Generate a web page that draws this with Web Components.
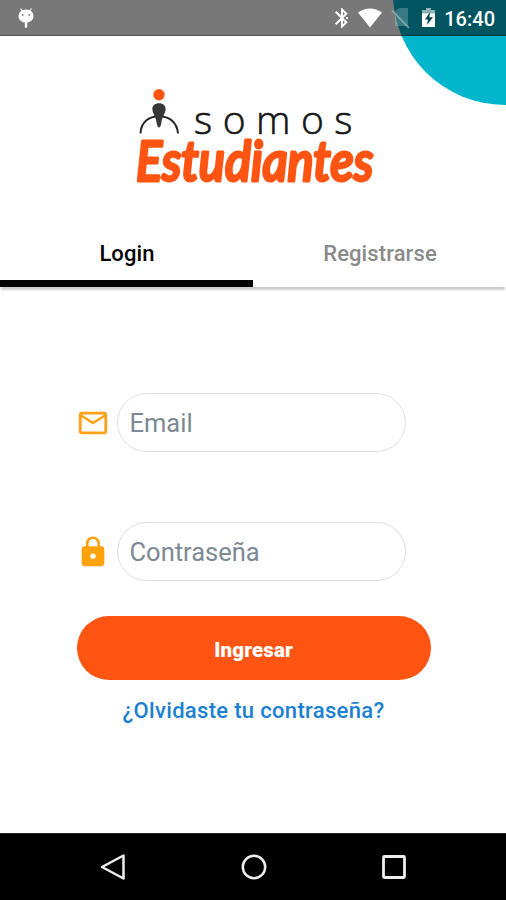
<!DOCTYPE html>
<html lang="es">
<head>
<meta charset="utf-8">
<title>Somos Estudiantes</title>
<style>
html,body{margin:0;height:100%;overflow:hidden;background:#fff}
body{font-family:Roboto,sans-serif}
</style>
</head>
<body>
<student-app></student-app>
<script>
function define(name, markup, setup) {
  const template = document.createElement('template');
  template.innerHTML = markup;
  customElements.define(name, class extends HTMLElement {
    constructor() {
      super();
      this.attachShadow({mode: 'open'}).append(template.content.cloneNode(true));
    }
    connectedCallback() { if (setup) setup(this, this.shadowRoot); }
  });
}

define('status-bar', `
<style>
:host{display:flex;align-items:center;height:36px;box-sizing:border-box;padding:0 11px 0 17px;background:rgba(0,0,0,.53);border-bottom:1px solid rgba(0,0,0,.3);color:#fff;position:relative;flex:none}
svg{display:block;flex:none}
.gap{flex:1}
span{font-size:20px;font-weight:500;line-height:36px;margin:2px 0 0 7px}
</style>
<svg width="18" height="24" viewBox="0 0 18 24" fill="#fff"><path d="M3.500 2.500 5.500 5M14.500 2.500 12.500 5" stroke="#fff" stroke-width="1.200"/><ellipse cx="9" cy="10" rx="7.600" ry="6.600"/><path d="M7.800 16h2.400v5q-1.200 2-2.400 0z"/><circle cx="5.700" cy="9" r="1" fill="#888"/><circle cx="12.300" cy="9" r="1" fill="#888"/></svg>
<div class="gap"></div>
<svg width="24" height="24" viewBox="0 0 24 24" fill="#fff"><path d="M17.710 7.710 12 2h-1v7.590L6.410 5 5 6.410 10.590 12 5 17.590 6.410 19 11 14.410V22h1l5.710-5.710-4.300-4.290zM13 5.830l1.880 1.880L13 9.590zm1.880 10.460L13 18.170v-3.760zM16 11h2v2h-2z"/></svg>
<svg width="26" height="22" viewBox="0 0 26 22" style="margin-left:3px" fill="#fff"><path d="M1 5.500Q13-2.500 25 5.500L13 20.500z"/></svg>
<svg width="20" height="22" viewBox="0 0 20 22" style="margin-left:8px"><path d="M4 4 8 1h9v18H4z" fill="#fff" opacity=".22"/><path d="M1 3.500 18 21" stroke="#a9c3c5" stroke-opacity=".6" stroke-width="1.800"/></svg>
<svg width="16" height="22" viewBox="0 0 16 22" style="margin-left:10px"><path d="M5 1h5v2h4v4H1V3h4z" fill="#8db3b6"/><path d="M1 6.500h13V20H1z" fill="#fff"/><path d="M9 5 4 12.500h3L6 18l6-7.800H8.400z" fill="#00454d"/></svg>
<span>16:40</span>`);

define('brand-logo', `
<style>
:host{display:block;width:252px;height:104px}
svg{display:block;overflow:visible}
</style>
<svg width="252" height="104" viewBox="128 84 252 104">
<circle cx="159" cy="94.700" r="5.700" fill="#ff5412"/>
<path d="M140.500 133.500C141 122 149 116.300 159 116.300S177 122 178 133.500" fill="none" stroke="#252525" stroke-width="2"/>
<path d="M159 103.200c4.200 0 7 2.700 6.600 6.400-.4 4.400-3.200 6.400-4.200 13.200-.5 3.100-1.200 4.700-2.400 4.700s-1.900-1.600-2.400-4.700c-1-6.800-3.800-8.800-4.200-13.200-.4-3.700 2.400-6.400 6.600-6.400z" fill="#38383a"/>
<text x="194" y="133.500" textLength="158.500" lengthAdjust="spacing" font-family="Open Sans,sans-serif" font-size="39" font-weight="300" fill="#171717" stroke="#171717" stroke-width=".6">somos</text>
<g transform="translate(136 181) scale(.83 1.080)"><text x="0" y="0" textLength="286" lengthAdjust="spacingAndGlyphs" font-family="Lato,sans-serif" font-size="51" font-weight="600" font-style="italic" fill="#ff5412" stroke="#ff5412" stroke-width="2.800" stroke-linejoin="round">Estudiantes</text></g>
</svg>`);

define('tab-item', `
<style>
:host{flex:1;display:flex;align-items:center;justify-content:center;box-sizing:border-box;padding:6px 0 0 1px;border-bottom:7px solid transparent;color:#8a8a8a;font-size:22px;font-weight:500;letter-spacing:.1px}
:host([active]){color:#000;border-bottom-color:#000}
</style><span><slot></slot></span>`);

define('tab-bar', `
<style>
:host{display:flex;height:67px;width:100%;box-shadow:0 4px 2px -1px rgba(0,0,0,.2)}
</style><slot></slot>`);

define('form-field', `
<style>
:host{display:flex;align-items:center;gap:7px;height:59px;margin-left:-1px}
slot{display:block}
.icon{display:flex;width:34px;justify-content:center}
input{box-sizing:border-box;width:289px;height:59px;border:1.500px solid #dfdfdf;border-radius:30px;padding:1px 12px 0;background:#fff;outline:none;font:400 25.500px Roboto,sans-serif;color:#333}
input::placeholder{color:#7d8994;opacity:1}
</style><div class="icon"><slot></slot></div><input>`, (host, root) => {
  const input = root.querySelector('input');
  input.placeholder = host.getAttribute('label');
  input.type = host.getAttribute('type') || 'text';
});

define('pill-button', `
<style>
:host{display:block}
button{display:block;width:100%;height:64px;border:0;border-radius:32px;padding:3px 0 0;background:#ff5412;color:#fff;font:900 20.500px Roboto,sans-serif;letter-spacing:.15px}
</style><button><slot></slot></button>`);

define('text-link', `
<style>
:host{display:block;text-align:center;color:#1b80d4;font-size:22px;font-weight:500;line-height:26px;letter-spacing:.32px;white-space:nowrap}
</style><span><slot></slot></span>`);

define('navigation-bar', `
<style>
:host{display:flex;align-items:center;justify-content:space-between;height:67px;box-sizing:border-box;padding:0 98px 0 99px;background:#000;flex:none;border-top:1px solid #292929}
svg{display:block}
</style>
<svg width="28" height="30" viewBox="0 0 28 30"><path d="M3 15 24.500 3.500v23z" fill="none" stroke="#eee" stroke-width="2.500" stroke-linejoin="round"/></svg>
<svg width="28" height="28" viewBox="0 0 28 28"><circle cx="14" cy="14" r="11.200" fill="none" stroke="#eee" stroke-width="2.500"/></svg>
<svg width="28" height="28" viewBox="0 0 28 28"><rect x="3.500" y="3.500" width="21" height="21" rx="1" fill="none" stroke="#eee" stroke-width="2.800"/></svg>`);

define('student-app', `
<style>
:host{display:flex;flex-direction:column;align-items:center;width:506px;height:900px;background:#fff;position:relative;overflow:hidden}
.disc{position:absolute;left:393px;top:-119px;width:224px;height:224px;border-radius:50%;background:#00b5cc}
status-bar,navigation-bar{width:100%}
brand-logo{margin:48px 0 32px 2px}
main{flex:1;display:flex;flex-direction:column;width:354px;padding:106px 0 0 1px}
form-field+form-field{margin-top:70px}
pill-button{margin-top:35px}
text-link{margin-top:18px}
svg{display:block}
</style>
<div class="disc"></div>
<status-bar></status-bar>
<brand-logo></brand-logo>
<tab-bar><tab-item active>Login</tab-item><tab-item>Registrarse</tab-item></tab-bar>
<main>
<form-field label="Email" type="email"><svg width="34" height="34" viewBox="0 0 24 24" fill="#ffa114"><path d="M20 4H4c-1.100 0-1.990.9-1.990 2L2 18c0 1.100.9 2 2 2h16c1.100 0 2-.9 2-2V6c0-1.100-.9-2-2-2zm0 14H4V8l8 5 8-5v10zm-8-7L4 6h16l-8 5z"/></svg></form-field>
<form-field label="Contraseña" type="password"><svg width="34" height="34" viewBox="0 0 24 24" fill="#ffa20a"><path d="M18 8h-1V6c0-2.760-2.240-5-5-5S7 3.240 7 6v2H6c-1.100 0-2 .9-2 2v10c0 1.100.9 2 2 2h12c1.100 0 2-.9 2-2V10c0-1.100-.9-2-2-2zm-6 9c-1.100 0-2-.9-2-2s.9-2 2-2 2 .9 2 2-.9 2-2 2zm3.100-9H8.900V6c0-1.710 1.390-3.100 3.100-3.100s3.100 1.390 3.100 3.100v2z"/></svg></form-field>
<pill-button>Ingresar</pill-button>
<text-link>¿Olvidaste tu contraseña?</text-link>
</main>
<navigation-bar></navigation-bar>`);
</script>
</body>
</html>
